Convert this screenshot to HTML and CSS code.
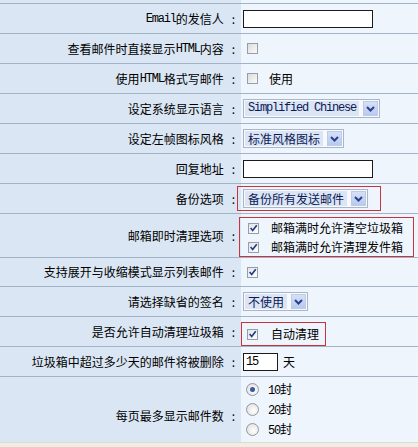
FILE: index.html
```html
<!DOCTYPE html>
<html lang="zh-CN">
<head>
    <meta charset="UTF-8">
    <title>邮箱参数设置</title>
    <link rel="stylesheet" href="styles.css">
</head>
<body>
    <div class="form">
        <div class="row top"><div class="label"></div><div class="field"></div></div>

        <div class="row">
            <div class="label"><span class="en">Email</span>的发信人<span class="colon">:</span></div>
            <div class="field"><input class="textbox" type="text"></div>
        </div>
        <div class="row">
            <div class="label">查看邮件时直接显示<span class="en">HTML</span>内容<span class="colon">:</span></div>
            <div class="field"><span class="cb"></span></div>
        </div>
        <div class="row">
            <div class="label">使用<span class="en">HTML</span>格式写邮件<span class="colon">:</span></div>
            <div class="field"><span class="cb"></span><span class="opt">使用</span></div>
        </div>
        <div class="row">
            <div class="label">设定系统显示语言<span class="colon">:</span></div>
            <div class="field">
                <span class="sel"><span class="sel-text en">Simplified Chinese</span><span class="sel-btn"><svg width="9" height="6" viewBox="0 0 9 6"><path d="M1 1 L4.5 4.5 L8 1" fill="none" stroke="#2b3f8f" stroke-width="2"/></svg></span></span>
            </div>
        </div>
        <div class="row">
            <div class="label">设定左帧图标风格<span class="colon">:</span></div>
            <div class="field">
                <span class="sel"><span class="sel-text">标准风格图标</span><span class="sel-btn"><svg width="9" height="6" viewBox="0 0 9 6"><path d="M1 1 L4.5 4.5 L8 1" fill="none" stroke="#2b3f8f" stroke-width="2"/></svg></span></span>
            </div>
        </div>
        <div class="row">
            <div class="label">回复地址<span class="colon">:</span></div>
            <div class="field"><input class="textbox" type="text"></div>
        </div>
        <div class="row">
            <div class="label">备份选项<span class="colon">:</span></div>
            <div class="field">
                <div class="mark mark-backup">
                    <span class="sel"><span class="sel-text">备份所有发送邮件</span><span class="sel-btn"><svg width="9" height="6" viewBox="0 0 9 6"><path d="M1 1 L4.5 4.5 L8 1" fill="none" stroke="#2b3f8f" stroke-width="2"/></svg></span></span>
                </div>
            </div>
        </div>
        <div class="row tall">
            <div class="label">邮箱即时清理选项<span class="colon">:</span></div>
            <div class="field bottom">
                <div class="mark mark-clean">
                    <div class="item"><span class="cb on"><svg width="11" height="11" viewBox="0 0 11 11"><path d="M2 5 L4.5 8 L9.5 1.5" fill="none" stroke="#1f3b8c" stroke-width="2"/></svg></span><span class="opt">邮箱满时允许清空垃圾箱</span></div>
                    <div class="item"><span class="cb on"><svg width="11" height="11" viewBox="0 0 11 11"><path d="M2 5 L4.5 8 L9.5 1.5" fill="none" stroke="#1f3b8c" stroke-width="2"/></svg></span><span class="opt">邮箱满时允许清理发件箱</span></div>
                </div>
            </div>
        </div>
        <div class="row short">
            <div class="label">支持展开与收缩模式显示列表邮件<span class="colon">:</span></div>
            <div class="field"><span class="cb on"><svg width="11" height="11" viewBox="0 0 11 11"><path d="M2 5 L4.5 8 L9.5 1.5" fill="none" stroke="#1f3b8c" stroke-width="2"/></svg></span></div>
        </div>
        <div class="row">
            <div class="label">请选择缺省的签名<span class="colon">:</span></div>
            <div class="field">
                <span class="sel"><span class="sel-text">不使用</span><span class="sel-btn"><svg width="9" height="6" viewBox="0 0 9 6"><path d="M1 1 L4.5 4.5 L8 1" fill="none" stroke="#2b3f8f" stroke-width="2"/></svg></span></span>
            </div>
        </div>
        <div class="row">
            <div class="label">是否允许自动清理垃圾箱<span class="colon">:</span></div>
            <div class="field bottom">
                <div class="mark mark-auto">
                    <span class="cb on"><svg width="11" height="11" viewBox="0 0 11 11"><path d="M2 5 L4.5 8 L9.5 1.5" fill="none" stroke="#1f3b8c" stroke-width="2"/></svg></span><span class="opt">自动清理</span>
                </div>
            </div>
        </div>
        <div class="row">
            <div class="label">垃圾箱中超过多少天的邮件将被删除<span class="colon">:</span></div>
            <div class="field"><input class="textbox days en" type="text" value="15"><span class="unit">天</span></div>
        </div>
        <div class="row last">
            <div class="label lower">每页最多显示邮件数<span class="colon">:</span></div>
            <div class="field radios">
                <div class="item"><span class="radio on"></span><span class="opt"><span class="en">10</span>封</span></div>
                <div class="item"><span class="radio"></span><span class="opt"><span class="en">20</span>封</span></div>
                <div class="item"><span class="radio"></span><span class="opt"><span class="en">50</span>封</span></div>
            </div>
        </div>
    </div>
</body>
</html>
```

FILE: styles.css
```css
:root {
    --label-bg: #dae6f3;
    --field-bg: #eef5fc;
    --line: #a2b3c6;
    --mark: #c8343c;
}
body {
    margin: 0;
    background: #efeee4;
    font-family: "Noto Sans CJK SC", sans-serif;
    font-size: 12px;
    color: #000;
}
.en {
    font-family: "Liberation Mono", "Noto Sans CJK SC", monospace;
    letter-spacing: -1.2px;
}
.row {
    display: grid;
    grid-template-columns: 241px 1fr;
    height: 30px;
    box-sizing: border-box;
    border-bottom: 1px solid var(--line);
}
.row.top {
    height: 4px;
}
.row.tall {
    height: 44px;
}
.row.short {
    height: 29px;
}
.row.last {
    height: 66px;
    border-bottom-color: #dcdccf;
}
.label {
    background: var(--label-bg);
    display: flex;
    align-items: center;
    justify-content: flex-end;
    padding-right: 6px;
    line-height: 16px;
    white-space: nowrap;
}
.label.lower {
    padding-top: 13px;
}
.colon {
    margin-left: 8px;
}
.field {
    background: var(--field-bg);
    display: flex;
    align-items: center;
    padding-left: 2px;
    line-height: 16px;
}
.field.bottom {
    align-items: flex-end;
}
.textbox {
    width: 130px;
    height: 18px;
    box-sizing: border-box;
    border: 1px solid #1b1b1b;
    background: #fff;
    margin: 0;
    padding: 0 2px;
    font-size: 12px;
}
.textbox.days {
    width: 35px;
}
.unit {
    margin-left: 5px;
}
.cb {
    width: 11px;
    height: 11px;
    box-sizing: border-box;
    border: 1px solid #959fab;
    background: linear-gradient(135deg, #dcdcd8, #fbfbfb);
    margin-left: 4px;
    display: inline-flex;
    align-items: center;
    justify-content: center;
    flex-shrink: 0;
}
.cb.on {
    background: linear-gradient(135deg, #e4e4e0, #ffffff);
}
.cb svg {
    display: block;
}
.opt {
    margin-left: 11px;
}
.sel {
    display: inline-flex;
    align-items: center;
    border: 1px solid #a9b6c9;
    background: #f7f9fc;
    padding: 1px;
    height: 19px;
    box-sizing: border-box;
}
.sel-text {
    background: #dbe5f4;
    color: #0b1a58;
    padding: 0 3px;
    line-height: 15px;
    height: 15px;
}
.sel-btn {
    width: 15px;
    height: 15px;
    box-sizing: border-box;
    margin-left: 4px;
    border: 1px solid #bccbe8;
    background: linear-gradient(#d6e0f6, #b9caee);
    display: inline-flex;
    align-items: center;
    justify-content: center;
}
.mark {
    border: 1px solid var(--mark);
}
.mark-backup {
    margin-left: -6px;
    padding: 2px 12px 2px 5px;
}
.mark-clean {
    margin-left: -4px;
    padding: 1px 10px 0 4px;
    display: flex;
    flex-direction: column;
    gap: 1px;
}
.mark-clean .item {
    height: 18px;
    display: flex;
    align-items: center;
}
.mark-clean .opt {
    margin-left: 12px;
}
.mark-auto {
    margin-left: -2px;
    height: 24px;
    box-sizing: border-box;
    padding: 0 6px 0 1px;
    display: flex;
    align-items: center;
}
.mark-auto .opt {
    margin-left: 13px;
}
.radios {
    flex-direction: column;
    align-items: flex-start;
    justify-content: center;
    padding-left: 5px;
}
.radios .item {
    height: 20px;
    display: flex;
    align-items: center;
}
.radios .opt {
    margin-left: 9px;
}
.radio {
    width: 13px;
    height: 13px;
    box-sizing: border-box;
    border-radius: 50%;
    border: 1px solid #8e98a4;
    background: radial-gradient(circle at 60% 60%, #ffffff, #dadad6);
    display: inline-flex;
    align-items: center;
    justify-content: center;
}
.radio.on::after {
    content: "";
    width: 5px;
    height: 5px;
    border-radius: 50%;
    background: #3a58a4;
}
```
